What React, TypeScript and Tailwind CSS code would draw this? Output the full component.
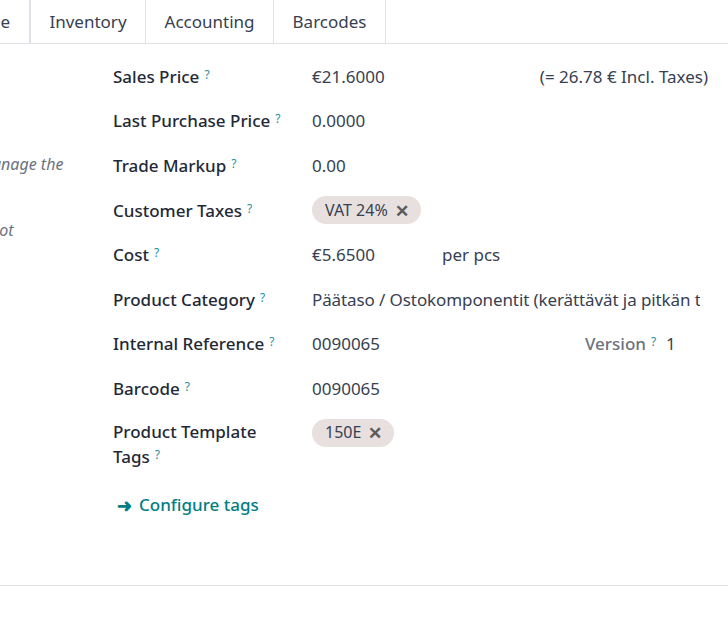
import React from "react";

const Help = () => (
  <sup className="ml-[5px] text-[12px] font-normal text-[#1a8fa6] relative -top-[4px]">?</sup>
);

function Row({ label, children, top = false }: { label: React.ReactNode; children?: React.ReactNode; top?: boolean }) {
  return (
    <div className={`grid grid-cols-[199px_1fr] ${top ? "items-start" : "items-center"} min-h-[44.6px]`}>
      <div className="font-medium text-[#1f2937] leading-[25px]">{label}</div>
      <div className="text-[#374151] leading-[25px] overflow-hidden whitespace-nowrap">{children}</div>
    </div>
  );
}

function Tag({ text }: { text: string }) {
  return (
    <span className="inline-flex items-center gap-[7px] rounded-full bg-[#e7e0df] pl-[13px] pr-[12px] h-[28px] text-[#374151] text-[16px]">
      {text}
      <span className="text-[#5b5b5b] font-bold text-[17px] leading-none">✕</span>
    </span>
  );
}

export default function App() {
  return (
    <div className="w-[728px] h-[617px] bg-white overflow-hidden text-[17px] font-['Noto_Sans',sans-serif]">
      {/* tabs */}
      <div className="flex h-[44px] border-b border-[#dee2e6] text-[#374151]">
        <div className="w-[31px] border-r-2 border-[#dee2e6] flex items-center justify-end pr-[19px] overflow-hidden">e</div>
        <div className="w-[115px] border-r border-[#dee2e6] flex items-center justify-center">Inventory</div>
        <div className="w-[128px] border-r border-[#dee2e6] flex items-center justify-center">Accounting</div>
        <div className="w-[112px] border-r border-[#dee2e6] flex items-center justify-center">Barcodes</div>
      </div>

      <div className="flex h-[542px] border-b border-[#e2e2e2]">
        {/* clipped left column */}
        <div className="w-[113px] overflow-hidden relative italic text-[#6b7280] text-[16px]">
          <div className="-ml-[22px] mt-[108px] whitespace-nowrap leading-[25px]">manage the</div>
          <div className="-ml-[10px] mt-[41px] whitespace-nowrap leading-[25px]">not</div>
        </div>

        <div className="w-[596px] pt-[10px]">
          <Row label={<>Sales Price<Help /></>}>
            <div className="flex justify-between pr-[1px]">
              <span>€21.6000</span>
              <span>(= 26.78 € Incl. Taxes)</span>
            </div>
          </Row>
          <Row label={<>Last Purchase Price<Help /></>}>0.0000</Row>
          <Row label={<>Trade Markup<Help /></>}>0.00</Row>
          <Row label={<>Customer Taxes<Help /></>}>
            <Tag text="VAT 24%" />
          </Row>
          <Row label={<>Cost<Help /></>}>
            <div className="flex">
              <span className="w-[130px]">€5.6500</span>
              <span>per pcs</span>
            </div>
          </Row>
          <Row label={<>Product Category<Help /></>}>
            <div className="w-[388px] overflow-hidden tracking-[-0.1px]">Päätaso / Ostokomponentit (kerättävät ja pitkän toimitusajan)</div>
          </Row>
          <Row label={<>Internal Reference<Help /></>}>
            <div className="flex">
              <span className="w-[273px]">0090065</span>
              <span className="text-[#6b7280] font-medium w-[81px]">Version<Help /></span>
              <span>1</span>
            </div>
          </Row>
          <Row label={<>Barcode<Help /></>}>0090065</Row>
          <Row top label={<div className="pt-[8px]">Product Template<br />Tags<Help /></div>}>
            <div className="pt-[8px]">
              <Tag text="150E" />
            </div>
          </Row>
          <div className="mt-[23px] ml-[4px] flex items-center gap-[7px] text-[#017e84] font-medium">
            <span className="font-bold text-[18px] leading-none">➜</span>
            <span>Configure tags</span>
          </div>
        </div>
      </div>
    </div>
  );
}
